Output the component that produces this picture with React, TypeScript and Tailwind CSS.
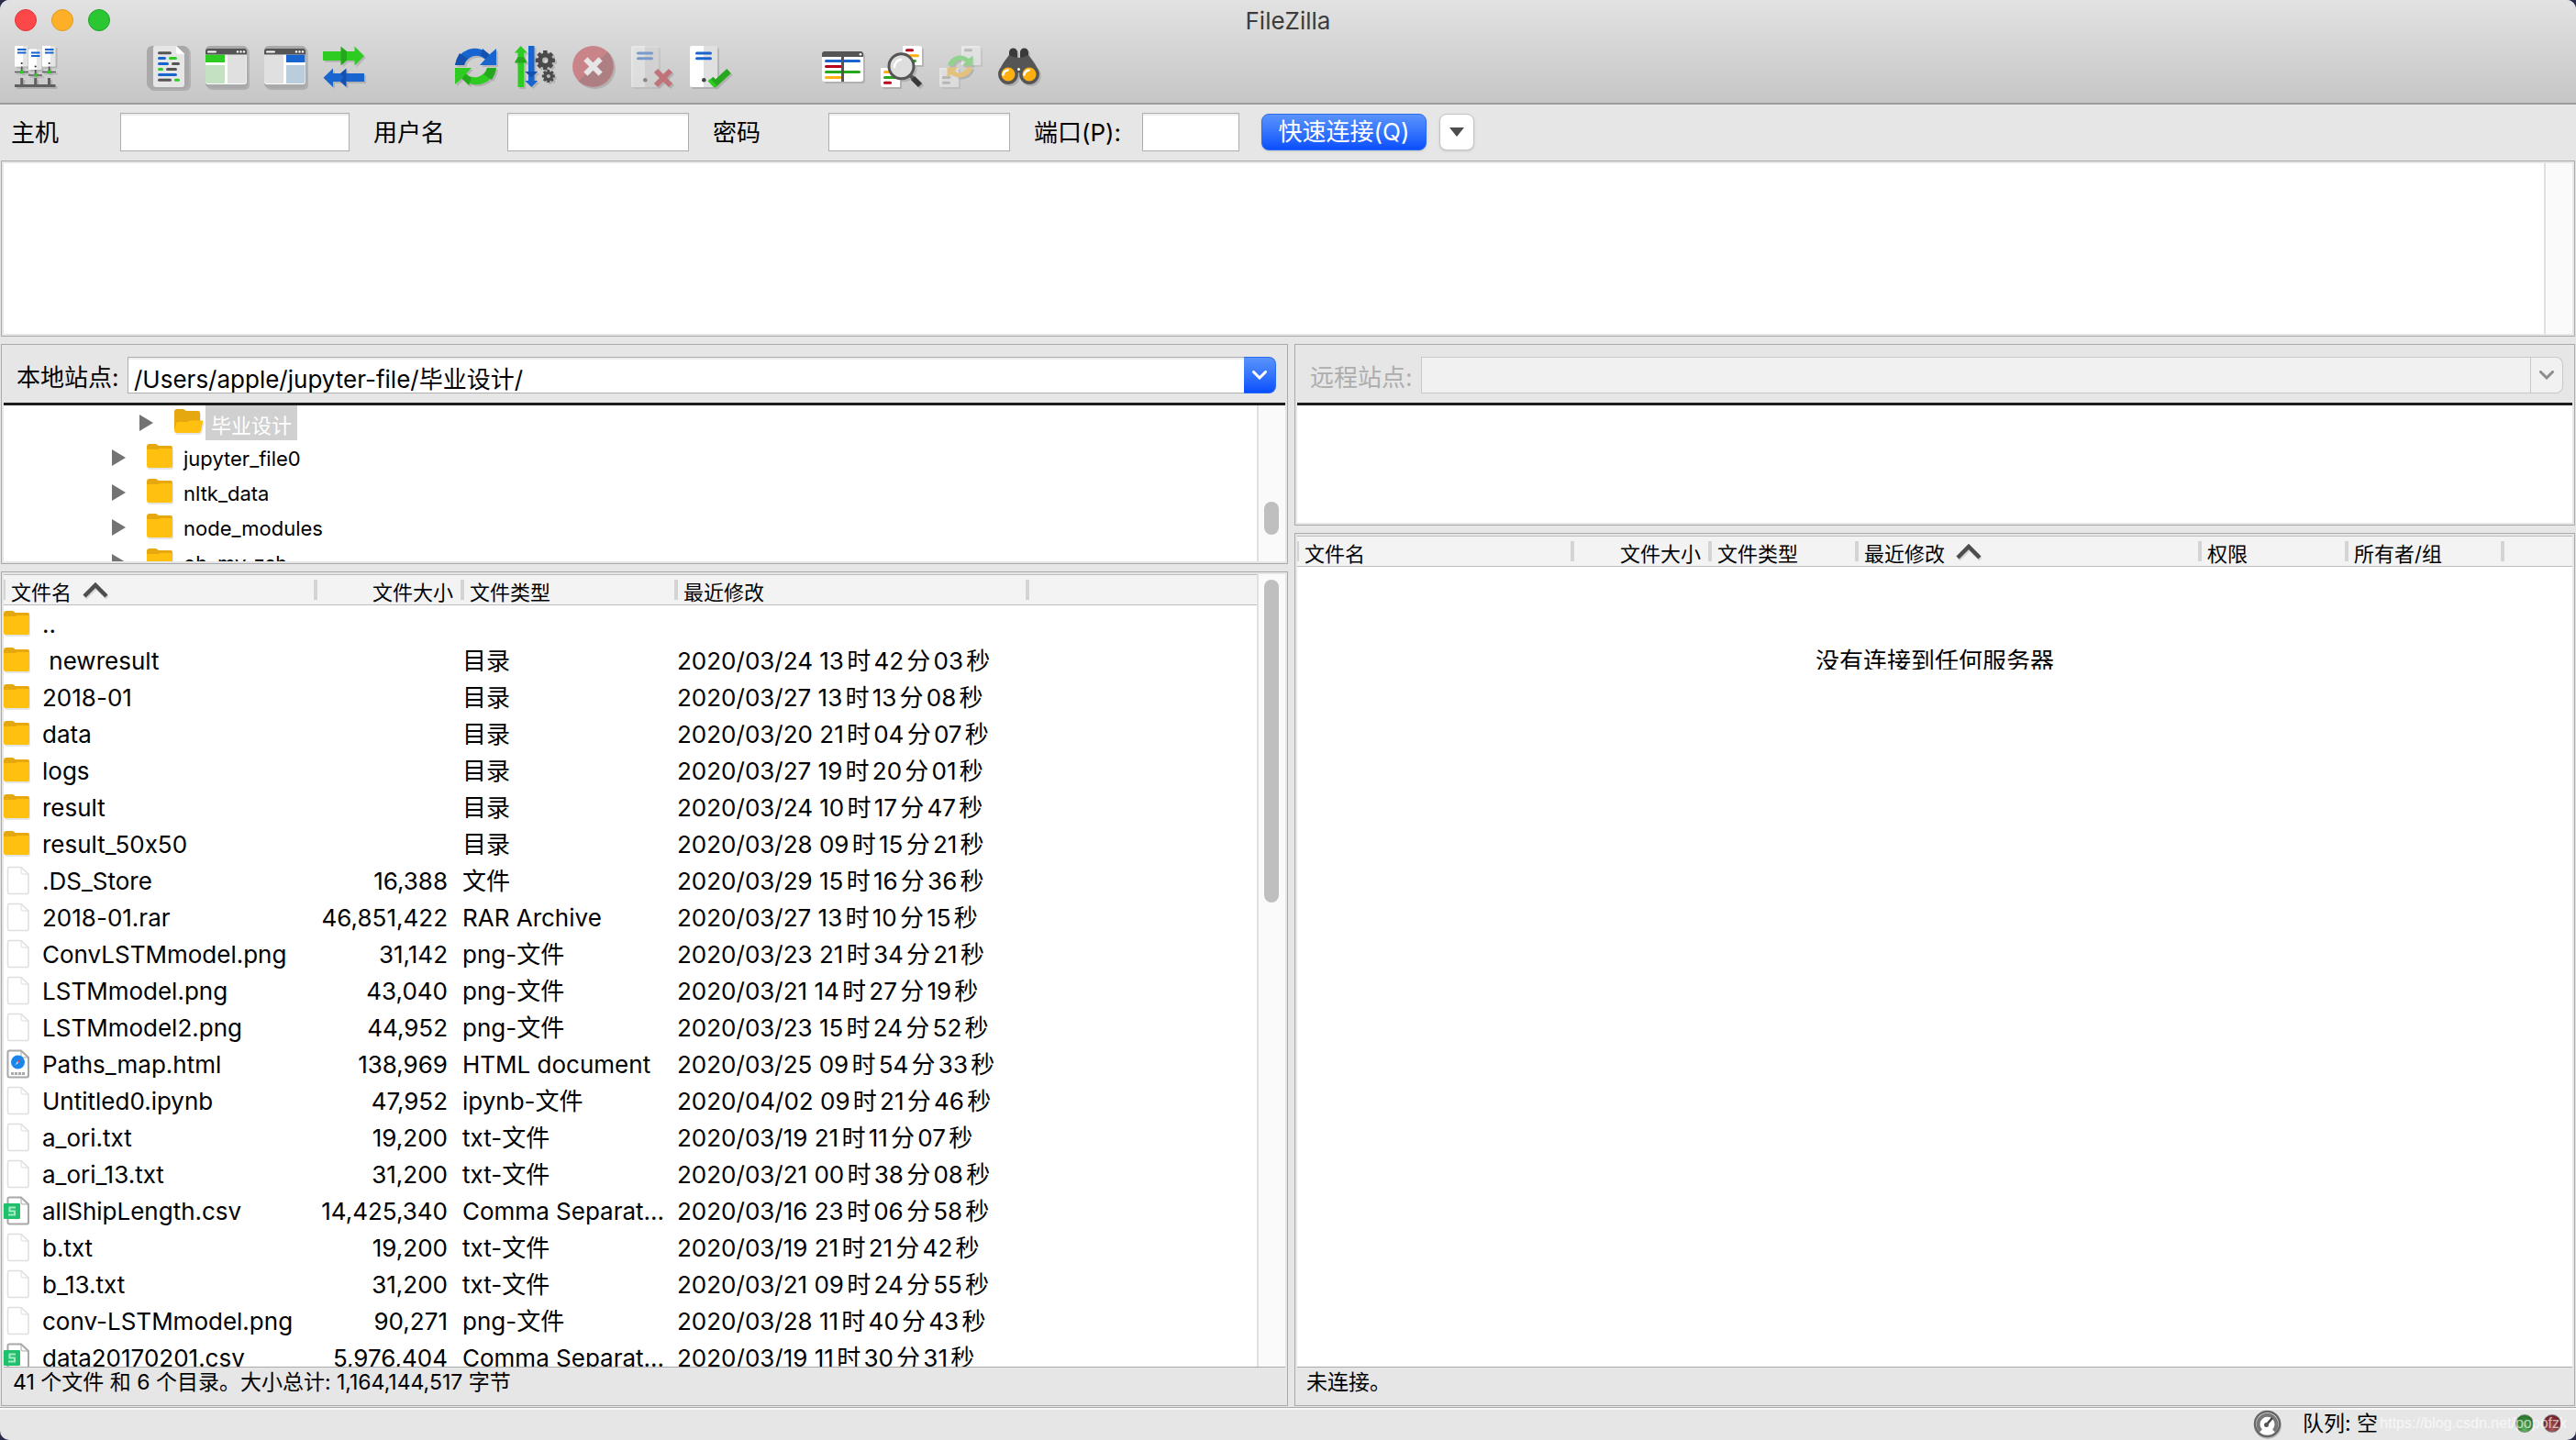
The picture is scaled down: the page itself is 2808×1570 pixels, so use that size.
import type { ReactNode } from "react";

type FileKind = "folder" | "file" | "html" | "csv";
type FileRow = [kind: FileKind, name: string, size: string, type: string, modified: string];

const files: FileRow[] = [
  ["folder", "..", "", "", ""],
  ["folder", " newresult", "", "目录", "2020/03/24 13时42分03秒"],
  ["folder", "2018-01", "", "目录", "2020/03/27 13时13分08秒"],
  ["folder", "data", "", "目录", "2020/03/20 21时04分07秒"],
  ["folder", "logs", "", "目录", "2020/03/27 19时20分01秒"],
  ["folder", "result", "", "目录", "2020/03/24 10时17分47秒"],
  ["folder", "result_50x50", "", "目录", "2020/03/28 09时15分21秒"],
  ["file", ".DS_Store", "16,388", "文件", "2020/03/29 15时16分36秒"],
  ["file", "2018-01.rar", "46,851,422", "RAR Archive", "2020/03/27 13时10分15秒"],
  ["file", "ConvLSTMmodel.png", "31,142", "png-文件", "2020/03/23 21时34分21秒"],
  ["file", "LSTMmodel.png", "43,040", "png-文件", "2020/03/21 14时27分19秒"],
  ["file", "LSTMmodel2.png", "44,952", "png-文件", "2020/03/23 15时24分52秒"],
  ["html", "Paths_map.html", "138,969", "HTML document", "2020/03/25 09时54分33秒"],
  ["file", "Untitled0.ipynb", "47,952", "ipynb-文件", "2020/04/02 09时21分46秒"],
  ["file", "a_ori.txt", "19,200", "txt-文件", "2020/03/19 21时11分07秒"],
  ["file", "a_ori_13.txt", "31,200", "txt-文件", "2020/03/21 00时38分08秒"],
  ["csv", "allShipLength.csv", "14,425,340", "Comma Separat...", "2020/03/16 23时06分58秒"],
  ["file", "b.txt", "19,200", "txt-文件", "2020/03/19 21时21分42秒"],
  ["file", "b_13.txt", "31,200", "txt-文件", "2020/03/21 09时24分55秒"],
  ["file", "conv-LSTMmodel.png", "90,271", "png-文件", "2020/03/28 11时40分43秒"],
  ["csv", "data20170201.csv", "5,976,404", "Comma Separat...", "2020/03/19 11时30分31秒"],
];

const GREEN = "#2ecc22";
const GREEN_DARK = "#26a81c";
const BLUE = "#1965d0";
const BLUE_DARK = "#1450ad";
const RED = "#b8001c";
const YELLOW = "#ffb010";
const DARK = "#555555";

function Line({ x1, x2, y, c, w = 3 }: { x1: number; x2: number; y: number; c: string; w?: number }) {
  return <path d={`M${x1 + w / 2} ${y}H${x2 - w / 2}`} stroke={c} strokeWidth={w} strokeLinecap="round" />;
}

function ServerStack({ x, y }: { x: number; y: number }) {
  return (
    <g transform={`translate(${x} ${y})`}>
      <rect width="14.5" height="22.5" rx="1" fill="#e4e4e4" />
      <path d="M1 0H9V22.500H1a1 1 0 0 1-1-1V1a1 1 0 0 1 1-1Z" fill="#fff" />
      <path d="M3 4H12.500M3 7.500H12.500" stroke={BLUE} strokeWidth="2" />
      <circle cx="7.700" cy="19" r="1.100" fill="#333" />
      <path d="M7.700 22.500V29" stroke={DARK} strokeWidth="1.800" />
      <path d="M0 28.500H15" stroke={DARK} strokeWidth="1.400" />
      <rect x="6" y="26.800" width="3.400" height="3.400" fill={GREEN} />
    </g>
  );
}

function SiteManagerIcon() {
  return (
    <>
      <ServerStack x={0} y={0} />
      <ServerStack x={30} y={0} />
      <ServerStack x={15} y={3.5} />
      <path d="M0 43.500H44.500M7.700 35V43M22.700 35V43M37.500 35V43" stroke="#606060" strokeWidth="3" />
    </>
  );
}

function LogIcon() {
  return (
    <>
      <rect width="46" height="47" rx="6" fill="#a9a9a9" />
      <path d="M9 0H32L41 9V42a3 3 0 0 1-3 3H10a3 3 0 0 1-3-3V2a2 2 0 0 1 2-2Z" fill="#e6e6e6" />
      <path d="M32 0L41.500 9H35a3 3 0 0 1-3-3Z" fill="#fff" />
      <Line x1={12} x2={27} y={7.7} c={DARK} />
      <Line x1={12} x2={21} y={13.6} c={BLUE} />
      <Line x1={24} x2={33} y={13.6} c={GREEN} />
      <Line x1={12} x2={24} y={19.5} c={BLUE} />
      <Line x1={27} x2={36} y={19.5} c={DARK} />
      <Line x1={12} x2={18} y={25.5} c={GREEN} />
      <Line x1={21} x2={33} y={25.5} c={DARK} />
      <Line x1={12} x2={33} y={31.4} c={BLUE} />
      <Line x1={12} x2={27} y={37.3} c={DARK} />
      <Line x1={30} x2={36} y={37.3} c={GREEN} />
    </>
  );
}

function PaneIcon({ side }: { side: "left" | "right" }) {
  const left = side === "left";
  return (
    <>
      <rect width="46" height="46" rx="5" fill="#a9a9a9" />
      <path d="M0 9H45V39a3 3 0 0 1-3 3H3a3 3 0 0 1-3-3Z" fill="#fff" />
      <path d={left ? "M24 9.500H44.500V38.500a2.500 2.500 0 0 1-2.500 2.500H24Z" : "M0 9.500H21V41H3a3 3 0 0 1-3-3Z"} fill="#e0e0e0" />
      <path d={left ? "M0 9.500H21V18H0Z" : "M24 9.500H44.500V18H24Z"} fill={left ? GREEN : BLUE} />
      <path
        d={left ? "M0 21H21V41H3a3 3 0 0 1-3-3Z" : "M24 21H44.500V38.500a2.500 2.500 0 0 1-2.500 2.500H24Z"}
        fill={left ? "#c4e1c2" : "#bacddc"}
      />
      <path d="M3 3H42a3 3 0 0 1 3 3V9.500H0V6a3 3 0 0 1 3-3Z" fill={DARK} />
      <Line x1={2} x2={12} y={6.4} c="#fff" w={2} />
      <circle cx="35" cy="6.400" r="1.200" fill="#fff" />
      <circle cx="38.500" cy="6.400" r="1.200" fill="#fff" />
      <circle cx="42" cy="6.400" r="1.200" fill="#fff" />
    </>
  );
}

function QueueIcon() {
  return (
    <>
      <path d="M0 6H34.500V.5L45 11L34.500 21.500V16H0Z" fill={GREEN} />
      <path d="M19.500 .5L26 6V16L19.500 21.500Z" fill={GREEN_DARK} />
      <path d="M45 30H11V24.500L.5 34.700L11 45V39H45Z" fill={BLUE} />
      <path d="M25.500 24.500L19 30L22 34.700L19 39L25.500 45Z" fill={BLUE_DARK} />
    </>
  );
}

function RefreshIcon() {
  return (
    <>
      <path d="M0 21A22 22 0 0 1 37.500 9.500L45 3V21H27L33 14.500A14 14 0 0 0 10 21Z" fill={BLUE} />
      <path d="M0 21Q1 14 5 8L14 14Q11 16 10 21Z" fill={BLUE_DARK} />
      <path d="M30 3L37.500 9.500L33 14.500Q30 11 28 10Z" fill={BLUE_DARK} />
      <path d="M45 24A22 22 0 0 1 7.500 35.500L0 42V24H18L12 30.500A14 14 0 0 0 35 24Z" fill={GREEN} />
      <path d="M45 24Q44 31 40 37L31 31Q34 29 35 24Z" fill={GREEN_DARK} />
      <path d="M7.500 35.500L12 30.500Q15 34 18 35L15 43Z" fill={GREEN_DARK} />
    </>
  );
}

function Gear({ cx, cy, r }: { cx: number; cy: number; r: number }) {
  return (
    <g transform={`translate(${cx} ${cy})`} stroke="#4a4a4a">
      {[0, 45, 90, 135].map((angle) => (
        <path key={angle} d={`M0 ${-r}V${-r * 0.6}M0 ${r * 0.6}V${r}`} strokeWidth={r * 0.42} transform={`rotate(${angle})`} />
      ))}
      <circle r={r * 0.53} strokeWidth={r * 0.46} />
    </g>
  );
}

function ProcessQueueIcon() {
  return (
    <>
      <path d="M4.500 45V7.500H.8L7.700 0L14.600 7.500H11V45Z" fill={GREEN} />
      <path d="M4.500 12L.8 18.500H14.600L11 12Z" fill={GREEN_DARK} />
      <path d="M16 0H22.500V38H26.300L19.300 45L12.300 38H16Z" fill={BLUE} />
      <path d="M12.300 28H26.300L19.300 34.500Z" fill={BLUE_DARK} />
      <Gear cx={34.3} cy={15.7} r={10.6} />
      <Gear cx={37.8} cy={33} r={7} />
    </>
  );
}

function CancelIcon() {
  return (
    <>
      <circle cx="22.500" cy="22.500" r="22.500" fill="#c9848a" />
      <path d="M38.400 6.600A22.500 22.500 0 0 1 6.600 38.400Z" fill="#ad7f82" />
      <path d="M16.500 16.500L28.500 28.500M28.500 16.500L16.500 28.500" stroke="#e6e6e6" strokeWidth="6" strokeLinecap="square" />
    </>
  );
}

function Server() {
  return (
    <>
      <rect width="30" height="45" rx="2.500" fill="#e0e0e0" />
      <path d="M2.500 0H15V45H2.500A2.500 2.500 0 0 1 0 42.500V2.500A2.500 2.500 0 0 1 2.500 0Z" fill="#fff" />
      <Line x1={6} x2={24} y={8} c={BLUE} />
      <Line x1={6} x2={24} y={13.7} c={BLUE} />
      <circle cx="15.300" cy="37.300" r="2.300" fill="#444" />
    </>
  );
}

function DisconnectIcon() {
  return (
    <>
      <g opacity=".45">
        <Server />
      </g>
      <path d="M27 27L43 43M43 27L27 43" stroke="#c0747a" strokeWidth="6" />
    </>
  );
}

function ReconnectIcon() {
  return (
    <>
      <Server />
      <path d="M23 36L28 41L42.500 27.500" stroke={GREEN_DARK} strokeWidth="6.500" />
      <path d="M21 37L28 44.500" stroke={GREEN} strokeWidth="4" />
    </>
  );
}

function FilterIcon() {
  return (
    <>
      <path d="M0 12H45V36a3 3 0 0 1-3 3H3a3 3 0 0 1-3-3Z" fill="#fff" />
      <path d="M3 6H42a3 3 0 0 1 3 3V12H0V9a3 3 0 0 1 3-3Z" fill={DARK} />
      <circle cx="42" cy="9.300" r="1.300" fill="#fff" />
      <Line x1={3} x2={42} y={16.6} c={BLUE} />
      <Line x1={3} x2={22} y={22.5} c={RED} />
      <Line x1={3} x2={42} y={28.5} c={GREEN_DARK} />
      <Line x1={3} x2={22} y={34.4} c={YELLOW} />
      <path d="M22.500 12V39" stroke={DARK} strokeWidth="3" />
    </>
  );
}

function CompareIcon() {
  return (
    <>
      <path d="M24 0H42a3 3 0 0 1 3 3V21H24Z" fill="#fff" />
      <path d="M0 24H21V45H3a3 3 0 0 1-3-3Z" fill="#fff" />
      <Line x1={27} x2={36} y={4.8} c={RED} />
      <Line x1={27} x2={42} y={10.7} c={YELLOW} />
      <Line x1={27} x2={39} y={16.6} c={GREEN_DARK} />
      <Line x1={3} x2={16} y={28.5} c={YELLOW} />
      <Line x1={3} x2={18} y={34.4} c={GREEN_DARK} />
      <Line x1={3} x2={12} y={40.3} c={RED} />
      <path d="M32 32L36 36" stroke={DARK} strokeWidth="4" />
      <path d="M35 35L43 43" stroke="#3a3a3a" strokeWidth="6" />
      <circle cx="22.500" cy="22.300" r="13.500" fill="#dedede" stroke={DARK} strokeWidth="3" />
      <path d="M15 23A8.500 8.500 0 0 1 22 15" stroke="#fff" strokeWidth="2.600" strokeLinecap="round" />
    </>
  );
}

function SyncBrowseIcon() {
  return (
    <>
      <g opacity=".45">
        <path d="M24 0H42a3 3 0 0 1 3 3V21H24Z" fill="#fff" />
        <path d="M0 24H21V45H3a3 3 0 0 1-3-3Z" fill="#fff" />
        <Line x1={27} x2={36} y={4.8} c="#aaa" />
        <Line x1={3} x2={12} y={34.4} c="#aaa" />
        <Line x1={3} x2={12} y={40.3} c="#aaa" />
      </g>
      <path d="M9 21.500A14 14 0 0 1 32 14L36.500 10.500V21.500H25L28.500 17.500A8 8 0 0 0 15.500 21.500Z" fill="#90d28e" />
      <path d="M36 23.500A14 14 0 0 1 13 31L8.500 34.500V23.500H20L16.500 27.500A8 8 0 0 0 29.500 23.500Z" fill="#e5c27c" />
    </>
  );
}

function BinocularsIcon() {
  return (
    <>
      <path d="M12 10V7a4.500 4.500 0 0 1 9 0V14H12ZM24 14V7a4.500 4.500 0 0 1 9 0V14Z" fill="#3a3a3a" />
      <path d="M12 10Q17 13 22.500 13T33 10L36 14Q41 20 44.500 29L34 39L25 31L22.500 29L20 31L11 39L.5 29Q4 20 9 14Z" fill={DARK} />
      <circle cx="11" cy="31" r="9.200" fill={YELLOW} stroke={DARK} strokeWidth="3.400" />
      <circle cx="34" cy="31" r="9.200" fill={YELLOW} stroke={DARK} strokeWidth="3.400" />
      <path d="M5.500 31.500A6 6 0 0 1 10.500 26.500M28.500 31.500A6 6 0 0 1 33.500 26.500" stroke="#fff" strokeWidth="2.600" strokeLinecap="round" />
      <circle cx="22.500" cy="25.500" r="1.500" fill="#fff" />
    </>
  );
}

const toolGroups: { label: string; icon: ReactNode; disabled?: boolean }[][] = [
  [{ label: "Site manager", icon: <SiteManagerIcon /> }],
  [
    { label: "Message log", icon: <LogIcon /> },
    { label: "Local tree", icon: <PaneIcon side="left" /> },
    { label: "Remote tree", icon: <PaneIcon side="right" /> },
    { label: "Transfer queue", icon: <QueueIcon /> },
  ],
  [
    { label: "Refresh", icon: <RefreshIcon /> },
    { label: "Process queue", icon: <ProcessQueueIcon /> },
    { label: "Cancel", icon: <CancelIcon />, disabled: true },
    { label: "Disconnect", icon: <DisconnectIcon />, disabled: true },
    { label: "Reconnect", icon: <ReconnectIcon /> },
  ],
  [
    { label: "Filters", icon: <FilterIcon /> },
    { label: "Compare", icon: <CompareIcon /> },
    { label: "Synchronized browsing", icon: <SyncBrowseIcon />, disabled: true },
    { label: "Find", icon: <BinocularsIcon /> },
  ],
];

function FolderIcon({ open = false }: { open?: boolean }) {
  return (
    <svg viewBox="0 0 32 28" fill="none" className="w-8 h-7 shrink-0 drop-shadow-[1px_2px_0_rgba(0,0,0,0.1)]" aria-hidden="true">
      <path d="M0 3a3 3 0 0 1 3-3H10L13 2H26a2 2 0 0 1 2 2V22H0Z" fill="#e6a80f" />
      {open ? (
        <path d="M2 16Q2 14 4 14H14L18 12.500H31.500L29 23.500Q28.500 26 26 26H3Q0 26 0 23Z" fill="#ffc00f" />
      ) : (
        <path d="M0 6H12L15 5H28V23.500a2.500 2.500 0 0 1-2.500 2.500H2.500A2.500 2.500 0 0 1 0 23.500Z" fill="#ffc00f" />
      )}
    </svg>
  );
}

function FileIcon({ kind }: { kind: FileKind }) {
  if (kind === "folder") return <FolderIcon />;
  const plain = kind === "file";
  return (
    <svg viewBox="0 0 32 32" fill="none" className="w-8 h-8 shrink-0" aria-hidden="true">
      <path
        d="M6 1.500H19L27 9V28.500a2 2 0 0 1-2 2H6.500a2 2 0 0 1-2-2V3a1.500 1.500 0 0 1 1.500-1.500Z"
        fill="#fff"
        stroke={plain ? "#dedede" : "#a8a8a8"}
        strokeWidth={plain ? 1.5 : 2}
      />
      <path d="M19 2V7a2 2 0 0 0 2 2H27" stroke={plain ? "#dedede" : "#a8a8a8"} />
      {kind === "html" && (
        <>
          <circle cx="15.500" cy="14" r="7.500" fill="#1b86ea" />
          <path d="M18.500 10.500L16.300 14.800L14.700 13.200Z" fill="#f04848" />
          <path d="M12.500 17.500L16.300 14.800L14.700 13.200Z" fill="#bfe0ff" />
          <path d="M8 26.500H23" stroke="#aaa" strokeWidth="3" strokeDasharray="3 1" />
        </>
      )}
      {kind === "csv" && (
        <>
          <rect x="0" y="8" width="18" height="17" rx="1" fill="#21c06d" />
          <path d="M13 12.500H6.500V16.500H12V20.500H5" stroke="#a5ecc6" strokeWidth="2" />
        </>
      )}
    </svg>
  );
}

function SortArrow() {
  return (
    <svg viewBox="0 0 28 18" fill="none" className="w-7 h-[18px] -mt-1 drop-shadow-[1px_2px_0_rgba(0,0,0,0.12)]" aria-hidden="true">
      <path d="M2 15L14 3L26 15" stroke="#4d4d4d" strokeWidth="4.500" />
    </svg>
  );
}

type ColumnHeaderProps = { label?: string; align?: "left" | "right"; sorted?: boolean; first?: boolean };

function ColumnHeader({ label = "", align = "left", sorted = false, first = false }: ColumnHeaderProps) {
  return (
    <th scope="col" className="p-0 font-normal">
      <div className={`flex h-8 items-center ${align === "right" ? "justify-between pr-2" : "gap-1.5"}`}>
        <span className={`h-[22px] shrink-0 bg-[#d4d4d4] ${first ? "w-0.5" : "w-1"}`} />
        <span className="flex items-center gap-3 pt-1.5 whitespace-nowrap">
          {label}
          {sorted && <SortArrow />}
        </span>
      </div>
    </th>
  );
}

function ScrollTrack({ children }: { children?: ReactNode }) {
  return <div className="w-[31px] shrink-0 border-l-2 border-[#e0e0e0] bg-[#fafafa] px-1.5">{children}</div>;
}

function Chevron({ color }: { color: string }) {
  return (
    <svg viewBox="0 0 16 10" fill="none" className="w-4 h-2.5" aria-hidden="true">
      <path d="M1.500 1.500L8 8L14.500 1.500" stroke={color} strokeWidth="3" strokeLinecap="round" />
    </svg>
  );
}

function TreeItem({ name, selected = false }: { name: string; selected?: boolean }) {
  return (
    <li className={`flex h-[38px] shrink-0 items-center ${selected ? "pl-[148px]" : "pl-[118px]"}`}>
      <svg viewBox="0 0 16 18" className="w-4 h-[18px] shrink-0" aria-hidden="true">
        <path d="M0 0L15 9L0 18Z" fill="#737373" />
      </svg>
      <span className="flex items-center pl-[22px] pb-0.5">
        <FolderIcon open={selected} />
      </span>
      <span
        className={`h-[38px] leading-[36px] whitespace-nowrap ${selected ? "ml-0.5 px-1.5 pt-1 bg-[#d0d0d0] text-white" : "ml-2 pt-0.5"}`}
      >
        {name}
      </span>
    </li>
  );
}

type FieldProps = { id: string; label: string; labelClass: string; inputClass: string; type?: string };

function Field({ id, label, labelClass, inputClass, type = "text" }: FieldProps) {
  return (
    <>
      <label htmlFor={id} className={`shrink-0 pt-0.5 whitespace-nowrap ${labelClass}`}>
        {label}
      </label>
      <input
        id={id}
        type={type}
        className={`h-[42px] border border-[#aeaeae] bg-white px-2 shadow-[inset_0_2px_0_#ececec] outline-none ${inputClass}`}
      />
    </>
  );
}

const pane = "flex flex-col border border-[#aaaaaa] bg-[#e6e6e6] p-0.5";
const tableClass = "w-full table-fixed border-collapse text-left";
const theadClass = "bg-[#f3f3f3] border-y border-[#bdbdbd] text-[22px] leading-[26px]";

export default function App() {
  return (
    <div className="h-screen bg-[#2b2b4a]">
      <div className="flex h-full flex-col overflow-hidden rounded-[10px] bg-[#e6e6e6] font-['Inter','Noto_Sans_CJK_SC',sans-serif] [font-variant-ligatures:no-contextual] text-[26px] leading-[32px] text-black">
        <header className="h-[114px] shrink-0 border-b-2 border-[#9c9c9c] bg-linear-to-b from-[#e2e2e2] to-[#c6c6c6]">
          <div className="grid h-11 grid-cols-3 items-center px-4">
            <div className="flex gap-4">
              <button type="button" aria-label="Close" className="size-6 rounded-full border border-[#e0333a] bg-[#fc4848]" />
              <button type="button" aria-label="Minimize" className="size-6 rounded-full border border-[#dd9a22] bg-[#fdb027]" />
              <button type="button" aria-label="Zoom" className="size-6 rounded-full border border-[#1fa329] bg-[#2bc733]" />
            </div>
            <h1 className="pt-0.5 text-center text-[#3c3c3c]">FileZilla</h1>
          </div>
          <div role="toolbar" className="flex gap-24 px-4 pt-1.5">
            {toolGroups.map((group, i) => (
              <div key={i} className="flex gap-4">
                {group.map(({ label, icon, disabled }) => (
                  <button key={label} type="button" aria-label={label} disabled={disabled} className="size-12">
                    <svg viewBox="0 0 48 48" fill="none" className="size-12 drop-shadow-[2px_2px_0_rgba(0,0,0,0.13)]" aria-hidden="true">
                      {icon}
                    </svg>
                  </button>
                ))}
              </div>
            ))}
          </div>
        </header>

        <form className="flex h-[61px] shrink-0 items-center px-3 pb-0.5">
          <Field id="host" label="主机" labelClass="w-[119px]" inputClass="w-[250px]" />
          <Field id="user" label="用户名" labelClass="w-[172px] pl-[26px]" inputClass="w-[198px]" />
          <Field id="password" type="password" label="密码" labelClass="w-[152px] pl-[26px]" inputClass="w-[198px]" />
          <Field id="port" label="端口(P):" labelClass="w-[144px] pl-[26px]" inputClass="w-[106px]" />
          <button
            type="button"
            className="ml-6 h-10 w-[180px] rounded-lg border border-[#2a6cf0] bg-linear-to-b from-[#5a93fb] to-[#0a4dfd] text-white whitespace-nowrap shadow-sm"
          >
            快速连接(Q)
          </button>
          <button
            type="button"
            aria-label="Quickconnect history"
            className="ml-3.5 flex h-10 w-[38px] items-center justify-center rounded-lg border border-[#c4c4c4] bg-white shadow-sm"
          >
            <svg viewBox="0 0 16 10" className="w-4 h-2.5" aria-hidden="true">
              <path d="M0 0H16L8 10Z" fill="#4d4d4d" />
            </svg>
          </button>
        </form>

        <div className="px-px">
          <section aria-label="Message log" className="flex h-48 border border-[#aaaaaa] p-0.5">
            <div className="flex-1 bg-white" />
            <ScrollTrack />
          </section>
        </div>

        <main className="grid min-h-0 flex-1 grid-cols-[1403fr_1396fr] gap-x-[7px] px-px pt-2">
          <div className="flex min-h-0 min-w-0 flex-col gap-2">
            <section className={`${pane} shrink-0`}>
              <div className="flex h-[61px] items-center pl-3.5 pr-2.5">
                <label htmlFor="local-path" className="w-[121px] shrink-0 pt-1.5 whitespace-nowrap">
                  本地站点:
                </label>
                <input
                  id="local-path"
                  defaultValue="/Users/apple/jupyter-file/毕业设计/"
                  className="h-10 min-w-0 flex-1 border border-r-0 border-[#aeaeae] bg-white px-1.5 pt-1.5 shadow-[inset_0_2px_0_#ececec] outline-none"
                />
                <button
                  type="button"
                  aria-label="Recent local folders"
                  className="flex h-10 w-[35px] items-center justify-center rounded-r-lg border border-l-0 border-[#2a6cf0] bg-linear-to-b from-[#5a93fb] to-[#0a4dfd]"
                >
                  <Chevron color="#fff" />
                </button>
              </div>
              <div className="flex h-[173px] border-t-3 border-[#1c1c1c] bg-white">
                <ul className="flex-1 overflow-hidden text-[22px]">
                  <TreeItem name="毕业设计" selected />
                  <TreeItem name="jupyter_file0" />
                  <TreeItem name="nltk_data" />
                  <TreeItem name="node_modules" />
                  <TreeItem name="oh_my_zsh" />
                </ul>
                <ScrollTrack>
                  <div className="mt-[105px] h-9 w-4 rounded-full bg-[#bfbfbf]" />
                </ScrollTrack>
              </div>
            </section>

            <section className={`${pane} min-h-0 flex-1`}>
              <div className="flex min-h-0 flex-1 bg-white">
                <div className="min-w-0 flex-1 overflow-hidden">
                  <table className={tableClass}>
                    <colgroup>
                      <col className="w-[338px]" />
                      <col className="w-[160px]" />
                      <col className="w-[233px]" />
                      <col className="w-[383px]" />
                      <col />
                    </colgroup>
                    <thead className={theadClass}>
                      <tr>
                        <ColumnHeader label="文件名" sorted first />
                        <ColumnHeader label="文件大小" align="right" />
                        <ColumnHeader label="文件类型" />
                        <ColumnHeader label="最近修改" />
                        <ColumnHeader />
                      </tr>
                    </thead>
                    <tbody>
                      {files.map(([kind, name, size, type, modified]) => (
                        <tr key={name} className="h-10 whitespace-pre">
                          <td className="p-0 pt-0.5">
                            <div className="flex h-[38px] items-center">
                              <span className="flex w-[42px] shrink-0 pb-0.5">
                                <FileIcon kind={kind} />
                              </span>
                              {name}
                            </div>
                          </td>
                          <td className="p-0 pt-0.5 pr-3.5 text-right">{size}</td>
                          <td className="p-0 pt-0.5 pl-0.5">{type}</td>
                          <td className="p-0 pt-0.5 pl-[3px] [text-autospace:normal]">{modified}</td>
                          <td className="p-0" />
                        </tr>
                      ))}
                    </tbody>
                  </table>
                </div>
                <ScrollTrack>
                  <div className="mt-1.5 h-[352px] w-4 rounded-full bg-[#bfbfbf]" />
                </ScrollTrack>
              </div>
              <p className="h-10 shrink-0 border-t border-[#aaaaaa] px-2.5 text-[23px]">
                41 个文件 和 6 个目录。大小总计: 1,164,144,517 字节
              </p>
            </section>
          </div>

          <div className="flex min-h-0 min-w-0 flex-col gap-2">
            <section className={`${pane} shrink-0`}>
              <div className="flex h-[61px] items-center pl-3.5 pr-2.5">
                <label htmlFor="remote-path" className="w-[121px] shrink-0 pt-1.5 text-[#adadad] whitespace-nowrap">
                  远程站点:
                </label>
                <input id="remote-path" disabled className="h-10 min-w-0 flex-1 border border-[#c8c8c8] bg-[#f1f1f1]" />
                <button
                  type="button"
                  disabled
                  aria-label="Recent remote folders"
                  className="flex h-10 w-[35px] items-center justify-center rounded-r-lg border border-l-0 border-[#c8c8c8] bg-[#f1f1f1]"
                >
                  <Chevron color="#8c8c8c" />
                </button>
              </div>
              <div className="h-[131px] border-t-3 border-[#1c1c1c] bg-white" />
            </section>

            <section className={`${pane} min-h-0 flex-1`}>
              <div className="min-h-0 flex-1 bg-white">
                <table className={tableClass}>
                  <colgroup>
                    <col className="w-[298px]" />
                    <col className="w-[150px]" />
                    <col className="w-[160px]" />
                    <col className="w-[374px]" />
                    <col className="w-[160px]" />
                    <col className="w-[170px]" />
                    <col />
                  </colgroup>
                  <thead className={theadClass}>
                    <tr>
                      <ColumnHeader label="文件名" first />
                      <ColumnHeader label="文件大小" align="right" />
                      <ColumnHeader label="文件类型" />
                      <ColumnHeader label="最近修改" sorted />
                      <ColumnHeader label="权限" />
                      <ColumnHeader label="所有者/组" />
                      <ColumnHeader />
                    </tr>
                  </thead>
                </table>
                <p className="mt-[84px] h-7 overflow-hidden text-center leading-[38px]">没有连接到任何服务器</p>
              </div>
              <p className="h-10 shrink-0 border-t border-[#aaaaaa] px-2.5 text-[23px]">未连接。</p>
            </section>
          </div>
        </main>

        <footer className="mt-px flex h-9 shrink-0 items-center justify-end border-t border-[#aaaaaa] pr-4 shadow-[inset_0_2px_0_#f8f8f8]">
          <svg viewBox="0 0 32 32" fill="none" className="size-8 mr-[22px]" aria-hidden="true">
            <circle cx="16" cy="17" r="15" fill="#bdbdbd" />
            <circle cx="15.500" cy="15.500" r="13.500" fill="#fff" stroke="#666" strokeWidth="2.500" />
            <path d="M8.500 23A10 10 0 1 1 22.500 23" stroke="#777" strokeWidth="4" />
            <path d="M14 17L21 9" stroke="#444" strokeWidth="2.500" />
            <circle cx="14.500" cy="16.500" r="2.500" fill="#555" />
          </svg>
          <span className="mr-[150px] pb-0.5 text-[23px] whitespace-nowrap">队列: 空</span>
          <div className="relative mb-0.5 flex gap-2.5">
            <span className="size-5 rounded-full border border-[#888] bg-radial-[at_50%_90%] from-[#5fb45f] to-[#0d5c12]" />
            <span className="size-5 rounded-full border border-[#888] bg-radial-[at_50%_90%] from-[#a85a5a] to-[#5e0b10]" />
            <span className="absolute -right-1.5 -top-0.5 font-['Liberation_Sans',Arial,sans-serif] text-base text-white/65 whitespace-nowrap">
              https://blog.csdn.net/popofzk
            </span>
          </div>
        </footer>
      </div>
    </div>
  );
}
